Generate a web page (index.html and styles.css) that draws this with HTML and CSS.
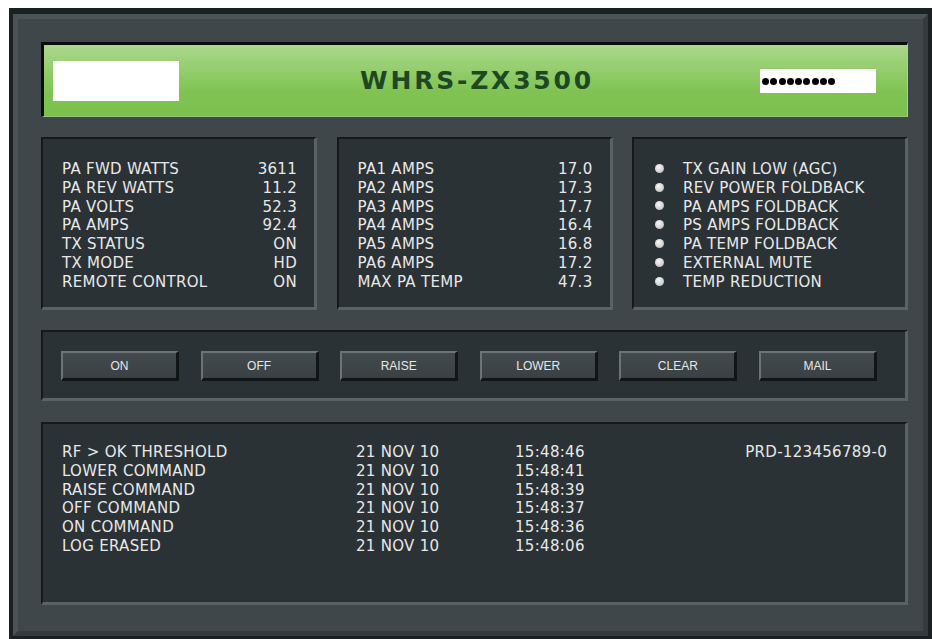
FILE: index.html
```html
<!DOCTYPE html>
<html lang="en">
<head>
<meta charset="utf-8">
<title>WHRS-ZX3500</title>
<link rel="stylesheet" href="styles.css">
</head>
<body>
<div class="frame">
  <div class="bezel">
    <header class="titlebar">
      <div class="logo-slot"></div>
      <h1 class="title">WHRS-ZX3500</h1>
      <div class="pass" aria-label="password">
        <span class="dot"></span><span class="dot"></span><span class="dot"></span>
        <span class="dot"></span><span class="dot"></span><span class="dot"></span>
        <span class="dot"></span><span class="dot"></span><span class="dot"></span>
      </div>
    </header>

    <section class="readouts">
      <div class="panel readout">
        <div class="row"><span>PA FWD WATTS</span><span>3611</span></div>
        <div class="row"><span>PA REV WATTS</span><span>11.2</span></div>
        <div class="row"><span>PA VOLTS</span><span>52.3</span></div>
        <div class="row"><span>PA AMPS</span><span>92.4</span></div>
        <div class="row"><span>TX STATUS</span><span>ON</span></div>
        <div class="row"><span>TX MODE</span><span>HD</span></div>
        <div class="row"><span>REMOTE CONTROL</span><span>ON</span></div>
      </div>
      <div class="panel readout">
        <div class="row"><span>PA1 AMPS</span><span>17.0</span></div>
        <div class="row"><span>PA2 AMPS</span><span>17.3</span></div>
        <div class="row"><span>PA3 AMPS</span><span>17.7</span></div>
        <div class="row"><span>PA4 AMPS</span><span>16.4</span></div>
        <div class="row"><span>PA5 AMPS</span><span>16.8</span></div>
        <div class="row"><span>PA6 AMPS</span><span>17.2</span></div>
        <div class="row"><span>MAX PA TEMP</span><span>47.3</span></div>
      </div>
      <div class="panel flags">
        <div class="flag">TX GAIN LOW (AGC)</div>
        <div class="flag">REV POWER FOLDBACK</div>
        <div class="flag">PA AMPS FOLDBACK</div>
        <div class="flag">PS AMPS FOLDBACK</div>
        <div class="flag">PA TEMP FOLDBACK</div>
        <div class="flag">EXTERNAL MUTE</div>
        <div class="flag">TEMP REDUCTION</div>
      </div>
    </section>

    <section class="panel controls">
      <button class="btn">ON</button>
      <button class="btn">OFF</button>
      <button class="btn">RAISE</button>
      <button class="btn">LOWER</button>
      <button class="btn">CLEAR</button>
      <button class="btn">MAIL</button>
    </section>

    <section class="panel log">
      <div class="log-table">
        <span>RF &gt; OK THRESHOLD</span><span>21 NOV 10</span><span>15:48:46</span>
        <span>LOWER COMMAND</span><span>21 NOV 10</span><span>15:48:41</span>
        <span>RAISE COMMAND</span><span>21 NOV 10</span><span>15:48:39</span>
        <span>OFF COMMAND</span><span>21 NOV 10</span><span>15:48:37</span>
        <span>ON COMMAND</span><span>21 NOV 10</span><span>15:48:36</span>
        <span>LOG ERASED</span><span>21 NOV 10</span><span>15:48:06</span>
      </div>
      <div class="serial">PRD-123456789-0</div>
    </section>
  </div>
</div>
</body>
</html>
```

FILE: styles.css
```css
html, body {
  margin: 0;
  padding: 0;
  background: #ffffff;
}

body {
  font-family: "DejaVu Sans", Verdana, sans-serif;
}

/* outer console housing */
.frame {
  width: 923px;
  height: 631px;
  margin: 8px 0 0 9px;
  box-sizing: border-box;
  border: 4px solid #1b2022;
  border-top-width: 6px;
  border-bottom-width: 3px;
  background: #40474a;
}

.bezel {
  height: 100%;
  box-sizing: border-box;
  border: 5px solid;
  border-color: #4b5356 #343a3d #343a3d #4b5356;
  padding: 23px 15px 0 23px;
  display: flex;
  flex-direction: column;
}

/* green title strip */
.titlebar {
  height: 75px;
  box-sizing: border-box;
  border-style: solid;
  border-width: 3px 1px 1px 3px;
  border-color: #0b0d0d #a6d68a #98c679 #0b0d0d;
  background: linear-gradient(#aad78e 0%, #95cd6d 35%, #80c353 65%, #7bc04d 100%);
  display: grid;
  grid-template-columns: 1fr auto 1fr;
  align-items: center;
  padding: 0 9px;
}

.logo-slot {
  justify-self: start;
  width: 126px;
  height: 40px;
  background: #ffffff;
}

.title {
  margin: 0;
  padding-left: 3px;
  font-family: "DejaVu Sans", Verdana, sans-serif;
  font-weight: bold;
  font-size: 25px;
  letter-spacing: 2.8px;
  color: #1e4824;
}

.pass {
  justify-self: end;
  width: 116px;
  height: 24px;
  margin-right: 22px;
  box-sizing: border-box;
  background: #ffffff;
  padding: 2px 0 0 2px;
  display: flex;
  align-items: center;
  gap: 1.3px;
}

.pass .dot {
  width: 7px;
  height: 7px;
  border-radius: 50%;
  background: #000000;
  flex: none;
}

/* recessed readout panels */
.panel {
  box-sizing: border-box;
  background: #2b3235;
  border-style: solid;
  border-width: 2px 3px 3px 2px;
  border-color: #15191b #5b6265 #5b6265 #15191b;
  color: #e8e8e8;
  font-size: 15px;
  line-height: 18.8px;
  letter-spacing: 0.3px;
}

.readouts {
  margin-top: 20px;
  height: 173px;
  display: grid;
  grid-template-columns: repeat(3, 1fr);
  gap: 19.5px;
}

.readout {
  padding: 21px 17px 0 19px;
}

.row {
  display: flex;
  justify-content: space-between;
}

.flags {
  padding: 21px 10px 0 21px;
}

.flag {
  display: flex;
  align-items: center;
}

.flag::before {
  content: "";
  flex: none;
  width: 9px;
  height: 9px;
  border-radius: 50%;
  margin-right: 19px;
  position: relative;
  top: -1px;
  background: radial-gradient(circle at 40% 35%, #f6f6f6 0%, #d4d4d4 55%, #a8a8a8 100%);
}

/* command buttons */
.controls {
  margin-top: 20px;
  height: 71px;
  padding: 19px 18px 0 18px;
  display: flex;
  gap: 21.6px;
  letter-spacing: 0;
}

.btn {
  width: 118px;
  height: 30px;
  box-sizing: border-box;
  padding: 0;
  border-style: solid;
  border-width: 2px 3px 3px 2px;
  border-color: #6d7477 #121516 #121516 #6d7477;
  background: linear-gradient(#424a4d, #3a4144);
  color: #e6e6e6;
  font-family: "Liberation Sans", Arial, sans-serif;
  font-size: 12px;
  cursor: pointer;
}

/* event log */
.log {
  margin-top: 21px;
  height: 183px;
  padding: 19px 18px 0 19px;
  display: flex;
  align-items: flex-start;
}

.log-table {
  display: grid;
  grid-template-columns: 294px 159px auto;
}

.serial {
  margin-left: auto;
}
```
